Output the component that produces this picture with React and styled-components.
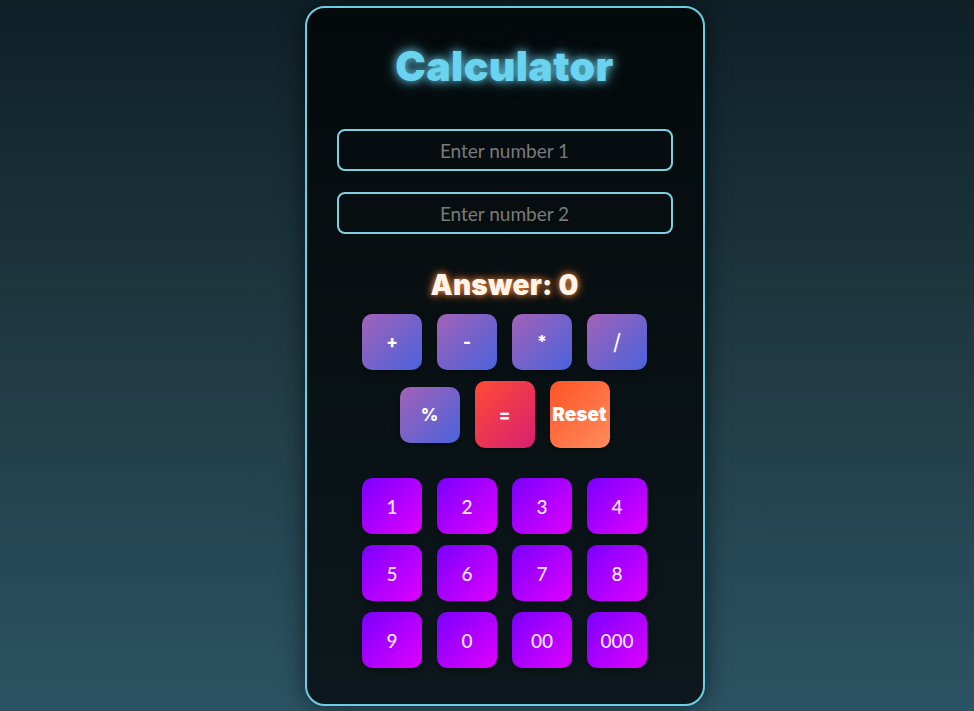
import React from "react";
import styled, { createGlobalStyle } from "styled-components";

const Global = createGlobalStyle`
  html, body { margin: 0; padding: 0; height: 100%; }
  body {
    background: linear-gradient(to bottom, #0f2027, #203a43, #2c5364);
    font-family: "Inter", "Noto Sans", sans-serif;
  }
  #root { height: 100%; }
`;

const Page = styled.div`
  box-sizing: border-box;
  min-height: 100%;
  padding: 1px 0 0 35px;
  display: flex;
  justify-content: center;
  align-items: center;
`;

const Card = styled.div`
  box-sizing: border-box;
  width: 400px;
  padding: 36px 30px 36px;
  background: rgba(0, 0, 0, 0.7);
  border: 2px solid #6ccde3;
  border-radius: 20px;
  box-shadow: 0 0 25px rgba(0, 0, 0, 0.55);
  display: flex;
  flex-direction: column;
  align-items: center;
`;

const Title = styled.h1`
  margin: 0 0 41px;
  font-family: "Inter", sans-serif;
  font-weight: 900;
  font-size: 41px;
  line-height: 44px;
  letter-spacing: 0.4px;
  color: #6ad4f0;
  text-shadow: 0 0 8px rgba(106, 212, 240, 0.9), 0 0 16px rgba(106, 212, 240, 0.5);
`;

const Input = styled.input`
  box-sizing: border-box;
  width: 100%;
  height: 42px;
  margin-bottom: 21px;
  background: transparent;
  border: 2px solid #7ecfe0;
  border-radius: 8px;
  text-align: center;
  font-family: "Lato", "Noto Sans", sans-serif;
  font-size: 19px;
  color: #ddd;
  outline: none;
  &::placeholder { color: #7a7a7a; }
`;

const Answer = styled.h2`
  margin: 14px 0 13px;
  font-family: "Inter", sans-serif;
  font-weight: 900;
  font-size: 28px;
  line-height: 32px;
  letter-spacing: 0.2px;
  color: #fff4ea;
  text-shadow: 0 0 6px rgba(255, 150, 70, 0.9), 0 0 12px rgba(255, 120, 40, 0.5);
`;

const Ops = styled.div`
  width: 285px;
  display: flex;
  flex-wrap: wrap;
  justify-content: center;
  align-items: center;
  gap: 11px 15px;
  margin-bottom: 30px;
`;

const grads = {
  op: "linear-gradient(135deg, #a362b8, #4a62dc)",
  eq: "linear-gradient(135deg, #ff4b35, #d81f72)",
  reset: "linear-gradient(135deg, #ff5325, #ff8c5e)",
  num: "linear-gradient(135deg, #7a00ff, #e000ff)",
};

const Btn = styled.button`
  box-sizing: border-box;
  width: 60px;
  height: ${(p) => (p.$tall ? 67 : 56)}px;
  padding: 0;
  border: none;
  border-radius: 10px;
  background: ${(p) => grads[p.$kind]};
  color: #fff;
  font-family: "Inter", sans-serif;
  font-weight: ${(p) => p.$weight || 800};
  font-size: ${(p) => p.$size || 17}px;
  display: flex;
  justify-content: center;
  align-items: center;
  white-space: nowrap;
  overflow: visible;
  box-shadow: 0 3px 8px rgba(0, 0, 0, 0.35);
  cursor: pointer;
`;

const NumBtn = styled(Btn)`
  font-family: "Lato", "Noto Sans", sans-serif;
  font-weight: 500;
  font-size: 19px;
  color: #fbeaff;
`;

const Nums = styled.div`
  display: grid;
  grid-template-columns: repeat(4, 60px);
  column-gap: 15px;
  row-gap: 11px;
`;

export default function App() {
  return (
    <Page>
      <Global />
      <Card>
        <Title>Calculator</Title>
        <Input placeholder="Enter number 1" />
        <Input placeholder="Enter number 2" />
        <Answer>Answer: 0</Answer>
        <Ops>
          <Btn $kind="op">+</Btn>
          <Btn $kind="op">-</Btn>
          <Btn $kind="op">*</Btn>
          <Btn $kind="op" $size={22} $weight={400}>/</Btn>
          <Btn $kind="op">%</Btn>
          <Btn $kind="eq" $tall>=</Btn>
          <Btn $kind="reset" $tall $size={19} $weight={900}>Reset</Btn>
        </Ops>
        <Nums>
          {["1", "2", "3", "4", "5", "6", "7", "8", "9", "0", "00", "000"].map((n) => (
            <NumBtn key={n} $kind="num">{n}</NumBtn>
          ))}
        </Nums>
      </Card>
    </Page>
  );
}
